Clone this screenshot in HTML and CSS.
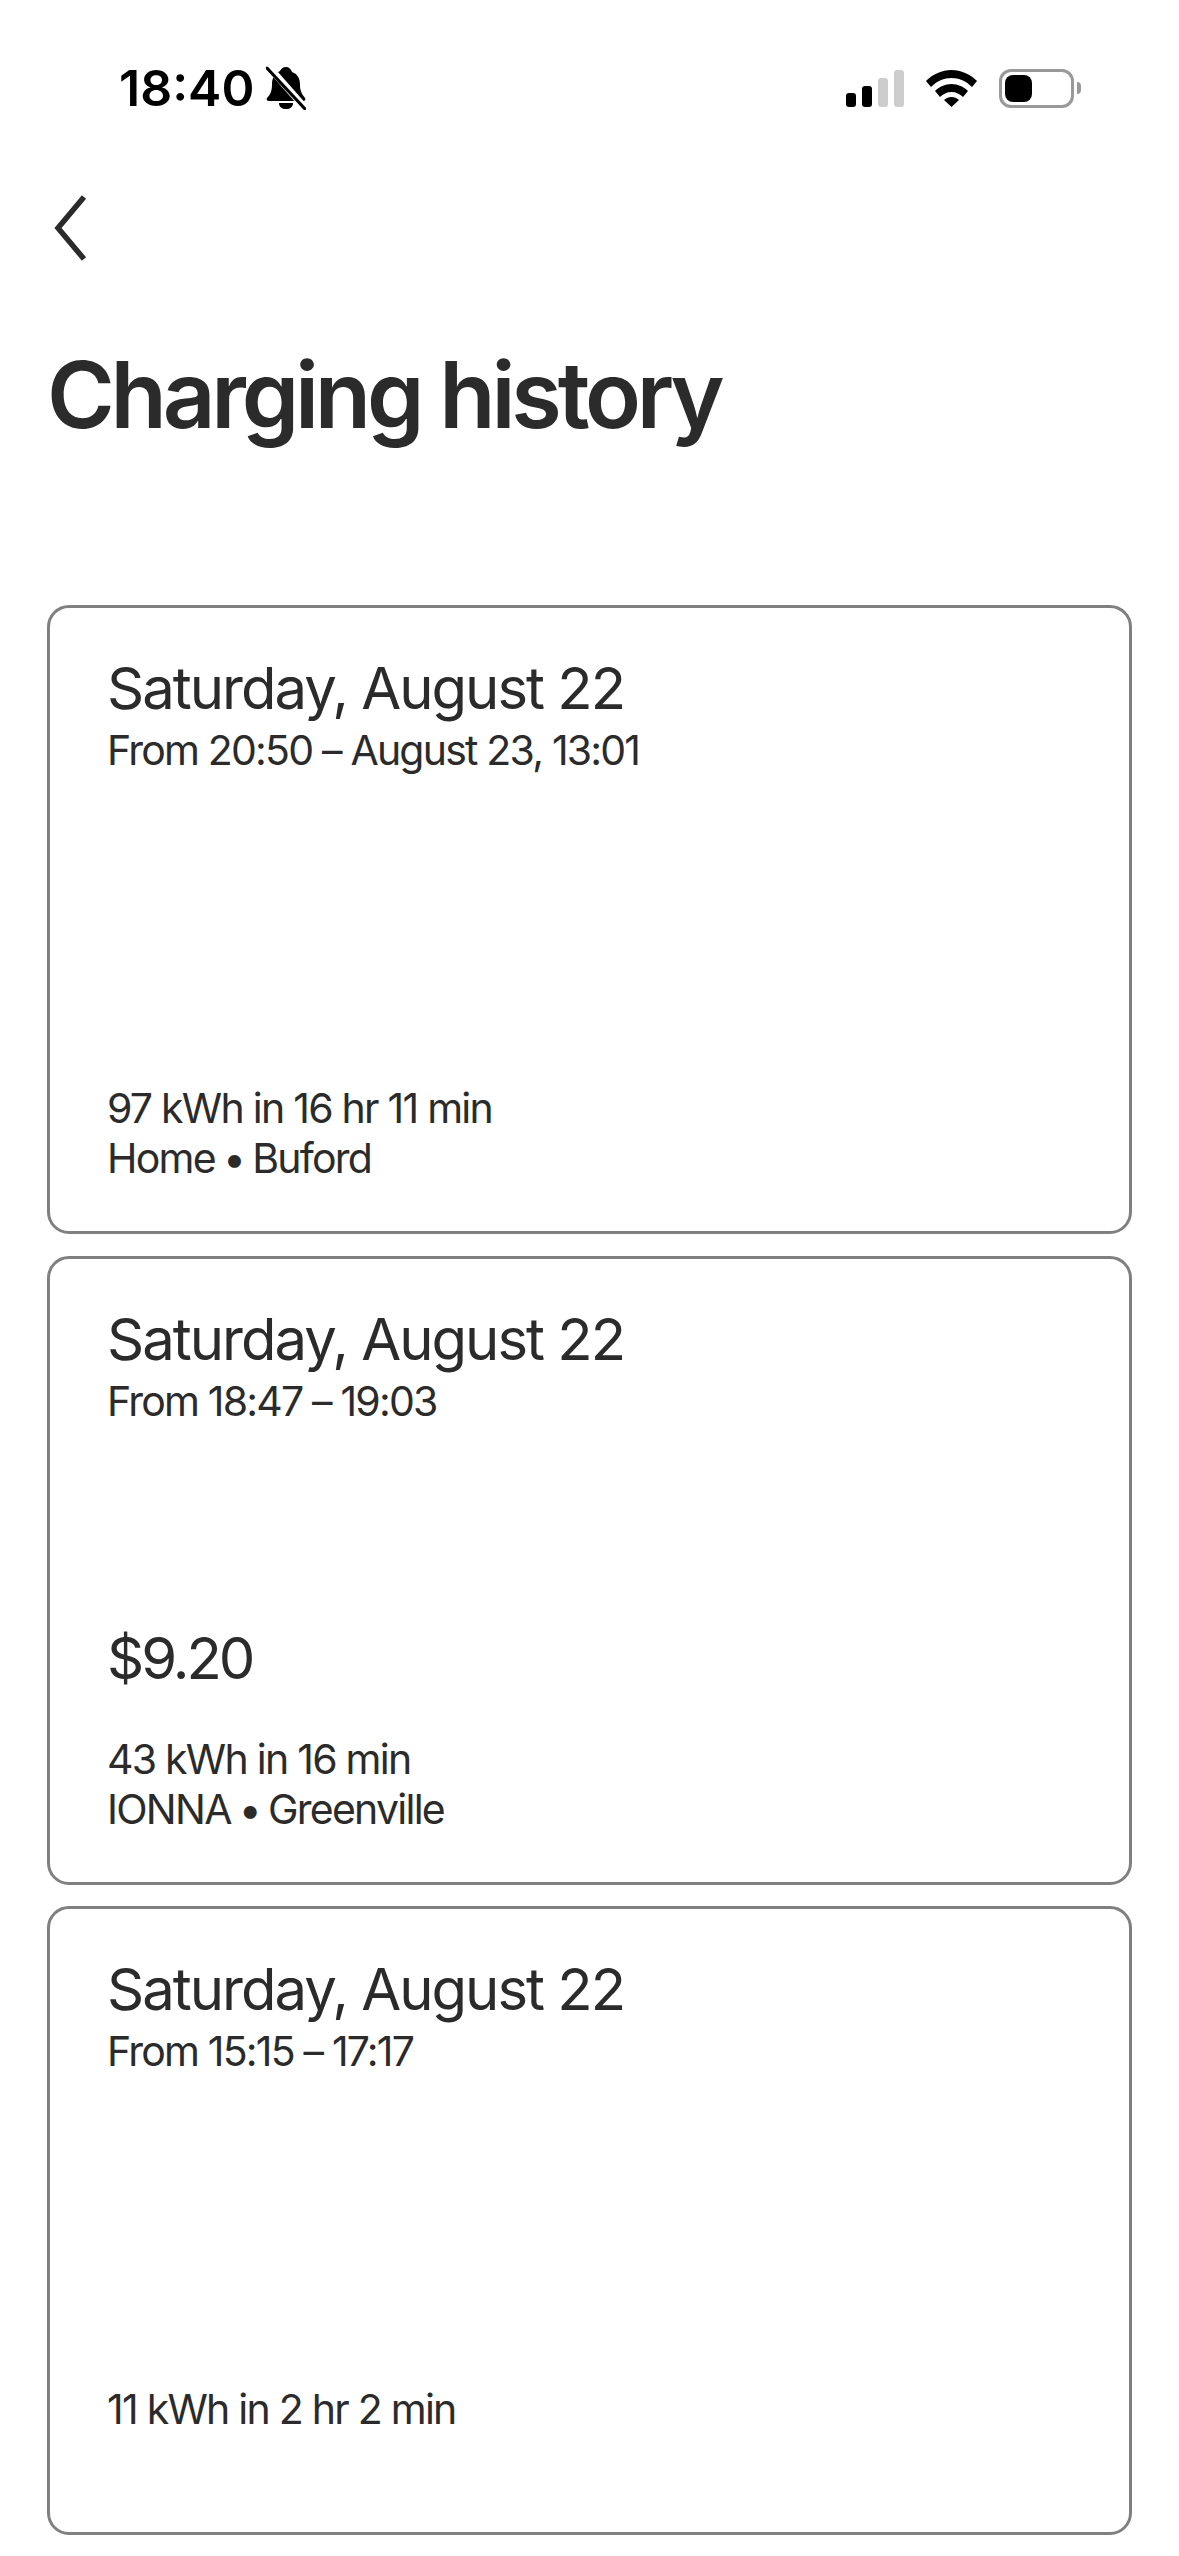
FILE: index.html
```html
<!DOCTYPE html>
<html lang="en">
<head>
  <meta charset="UTF-8">
  <meta name="viewport" content="width=device-width, initial-scale=1.0">
  <title>Charging history</title>
  <link rel="stylesheet" href="styles.css">
</head>
<body>
  <div class="status-bar">
    <div class="status-left">
      <span class="time">18:40</span>
      <svg class="bell" width="40" height="44" viewBox="0 0 40 44">
        <path d="M20 1c3 0 5 2 6 5 6 2 8 7 8 13 0 6 2 9 5 13 1 2 0 3-2 3H3c-2 0-3-2-2-3 4-4 5-8 5-14 0-6 3-11 8-13 1-2 3-4 6-4z" fill="#000"/>
        <path d="M13 37h14c0 4-3 6-7 6s-7-2-7-6z" fill="#000"/>
        <path d="M2 0 L40 43" stroke="#fff" stroke-width="7"/>
        <path d="M1 2 L39 43" stroke="#000" stroke-width="3" stroke-linecap="round"/>
      </svg>
    </div>
    <div class="status-right">
      <div class="signal">
        <span class="bar bar-1"></span>
        <span class="bar bar-2"></span>
        <span class="bar bar-3 off"></span>
        <span class="bar bar-4 off"></span>
      </div>
      <svg class="wifi" width="51" height="37" viewBox="0 0 51 37">
        <path d="M0 11C7 4 16 0 25.500 0S44 4 51 11l-5 6C40 11 33 8 25.500 8S11 11 5 17z" fill="#000"/>
        <path d="M9 21c4-4 10-7 16.500-7S38 17 42 21l-5 6c-3-3-7-5-11.500-5S17 24 14 27z" fill="#000"/>
        <path d="M18 30c2-2 5-3 7.500-3s5.500 1 7.500 3l-7.500 7z" fill="#000"/>
      </svg>
      <div class="battery">
        <div class="battery-body"><span class="battery-level"></span></div>
        <span class="battery-nub"></span>
      </div>
    </div>
  </div>

  <div class="back">
    <svg width="34" height="66" viewBox="0 0 34 66">
      <path d="M30 2 L4 33 L30 64" fill="none" stroke="#2b2b2b" stroke-width="5.500"/>
    </svg>
  </div>

  <h1>Charging history</h1>

  <div class="list">
    <div class="card">
      <div class="date">Saturday, August 22</div>
      <div class="range">From 20:50 – August 23, 13:01</div>
      <div class="info">
        <div>97 kWh in 16 hr 11 min</div>
        <div>Home <span class="dot">•</span> Buford</div>
      </div>
    </div>
    <div class="card">
      <div class="date">Saturday, August 22</div>
      <div class="range">From 18:47 – 19:03</div>
      <div class="price">$9.20</div>
      <div class="info">
        <div>43 kWh in 16 min</div>
        <div>IONNA <span class="dot">•</span> Greenville</div>
      </div>
    </div>
    <div class="card">
      <div class="date">Saturday, August 22</div>
      <div class="range">From 15:15 – 17:17</div>
      <div class="info">
        <div>11 kWh in 2 hr 2 min</div>
      </div>
    </div>
  </div>
</body>
</html>
```

FILE: styles.css
```css
body {
  margin: 0;
  background-color: #fff;
  color: #2b2b2b;
  font-family: Inter, "Liberation Sans", sans-serif;
}

/* status bar */
.status-bar {
  display: flex;
  justify-content: space-between;
  align-items: center;
  height: 62px;
  padding: 57px 98px 0 119px;
}
.status-left {
  display: flex;
  align-items: center;
  gap: 12px;
}
.time {
  font-size: 50px;
  font-weight: 600;
  line-height: 62px;
  color: #000;
}
.status-right {
  display: flex;
  align-items: center;
  gap: 22px;
}
.signal {
  display: flex;
  align-items: flex-end;
  gap: 6px;
  height: 37px;
}
.bar {
  width: 10px;
  background-color: #000;
  border-radius: 3px;
}
.bar.off {
  background-color: #ccc;
}
.bar-1 { height: 14px; }
.bar-2 { height: 21px; }
.bar-3 { height: 29px; }
.bar-4 { height: 37px; }
.battery {
  display: flex;
  align-items: center;
  gap: 3px;
}
.battery-body {
  box-sizing: border-box;
  width: 75px;
  height: 39px;
  padding: 3px;
  border: 3px solid #999;
  border-radius: 12px;
}
.battery-level {
  display: block;
  width: 27px;
  height: 27px;
  background-color: #000;
  border-radius: 8px;
}
.battery-nub {
  width: 4px;
  height: 12px;
  background-color: #999;
  border-radius: 0 6px 6px 0;
}

/* header */
.back {
  height: 66px;
  padding: 76px 0 0 54px;
}
.back svg {
  display: block;
}
h1 {
  margin: 78px 0 0 47px;
  font-size: 92px;
  font-weight: 600;
  line-height: 112px;
  letter-spacing: -4.2px;
}

/* cards */
.list {
  display: flex;
  flex-direction: column;
  gap: 21.5px;
  margin: 0 47px;
  padding-top: 154px;
}
.card {
  box-sizing: border-box;
  display: flex;
  flex-direction: column;
  height: 629px;
  padding: 44px 57px 0;
  border: 3px solid #808080;
  border-radius: 22px;
}
.date {
  font-size: 58px;
  line-height: 73px;
  letter-spacing: -2px;
}
.range {
  font-size: 41px;
  line-height: 50px;
  letter-spacing: -1.8px;
}
.price {
  margin-top: 197px;
  font-size: 58px;
  line-height: 70px;
  letter-spacing: -3px;
}
.info {
  margin-top: auto;
  min-height: 100px;
  padding-bottom: 48px;
  font-size: 41px;
  line-height: 50px;
  letter-spacing: -1.75px;
}
.dot {
  font-weight: 700;
}
```
